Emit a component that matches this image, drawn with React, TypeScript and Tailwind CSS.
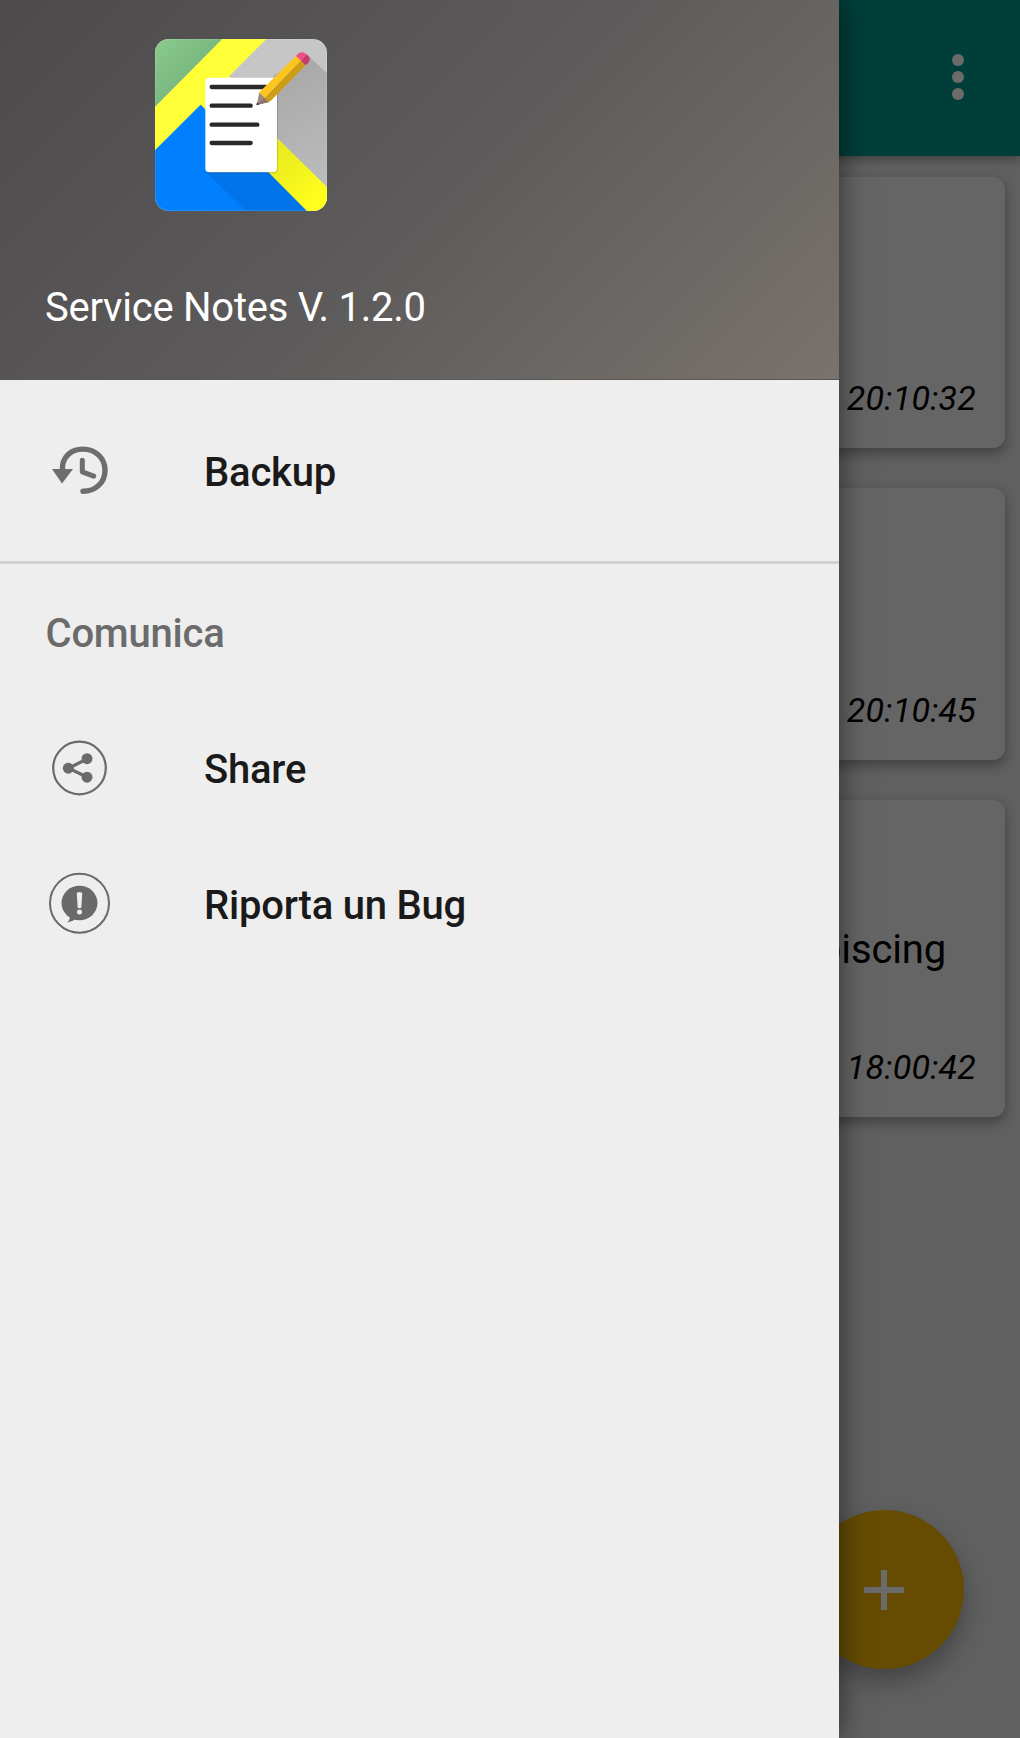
import type { ReactNode } from "react";

function AppLogo() {
  return (
    <svg className="block h-[172px] w-[172px]" viewBox="45 40 516 516" aria-hidden="true">
      <defs>
        <clipPath id="tile">
          <rect x="45" y="40" width="516" height="516" rx="42" />
        </clipPath>
        <linearGradient id="green" x1="0" y1="0" x2="1" y2="1">
          <stop offset="0" stopColor="#8acb8d" />
          <stop offset="0.5" stopColor="#7ab980" />
        </linearGradient>
        <linearGradient id="gray" gradientUnits="userSpaceOnUse" x1="400" y1="150" x2="561" y2="484">
          <stop offset="0" stopColor="#a9a9a9" />
          <stop offset="1" stopColor="#bcbcbc" />
        </linearGradient>
        <linearGradient id="yellow" gradientUnits="userSpaceOnUse" x1="410" y1="380" x2="540" y2="530">
          <stop offset="0" stopColor="#eaea20" />
          <stop offset="1" stopColor="#ffff1c" />
        </linearGradient>
      </defs>
      <g clipPath="url(#tile)">
        <rect x="45" y="40" width="516" height="516" fill="#c6c6c6" />
        <path d="M45 40H247L45 244Z" fill="url(#green)" />
        <path d="M247 40H379L200 219L182 237L45 374V244Z" fill="#ffff38" />
        <path d="M182 237L267 152L561 484V556H498Z" fill="#ffff38" />
        <path d="M410 336L561 484V556H498L385 440H410Z" fill="url(#yellow)" />
        <path d="M400 150V336H410L561 484V143L505 90Z" fill="url(#gray)" />
        <path d="M182 237L500 556H45V374Z" fill="#007fff" />
        <path d="M200 440H385L500 556H318Z" fill="#0074e8" />
        <rect x="46" y="41" width="514" height="514" rx="41" fill="none" stroke="#fff" strokeOpacity="0.2" strokeWidth="2" />
      </g>
      <rect x="198" y="160" width="215" height="283" rx="12" fill="#000" opacity="0.22" />
      <rect x="196" y="156" width="215" height="284" rx="12" fill="#fff" />
      <g stroke="#292929" strokeWidth="13" strokeLinecap="round">
        <path d="M215 184H378M215 240H332M215 297H352M215 352H332" />
      </g>
      <path d="M350 238L358 200L388 229Z" fill="#a1887f" />
      <path d="M350 238L374 216L388 229Z" fill="#8d756d" />
      <path d="M349 239L351 230L358 236Z" fill="#333" />
      <path d="M358 200L468 91L483 105L374 216Z" fill="#ffc51f" />
      <path d="M374 216L483 105L497 119L391 227Q380 229 374 216Z" fill="#cd9e15" />
      <path d="M468 91L474 84Q486 74 500 86L483 105Z" fill="#f0508a" />
      <path d="M483 105L500 86Q516 98 505 111L497 119Z" fill="#c83b6f" />
    </svg>
  );
}

function HistoryIcon() {
  return (
    <svg className="mb-0.5 block h-[50px] w-[58px] text-[#6d6d6d]" viewBox="0 0 58 50" aria-hidden="true">
      <path d="M11.4 25.5C10.6 11.9 20 4.1 32 4.1C44.5 4.1 54 13 54 25.4C54 37.5 44.5 46.3 32 46.3" fill="none" stroke="currentColor" strokeWidth="5.4" strokeLinecap="round" />
      <path d="M1 24H22L11 38.5Z" fill="currentColor" />
      <path d="M31.3 15.2V26.8L42.7 31.2" fill="none" stroke="currentColor" strokeWidth="5" strokeLinecap="round" strokeLinejoin="round" />
    </svg>
  );
}

function ShareIcon() {
  return (
    <svg className="block h-[58px] w-[58px] text-[#6a6a6a]" viewBox="0 0 58 58" aria-hidden="true">
      <circle cx="28.5" cy="29" r="26.3" fill="none" stroke="currentColor" strokeWidth="2.2" />
      <path d="M36 20L17.5 29.2L36 38" fill="none" stroke="currentColor" strokeWidth="3.2" />
      <g fill="currentColor">
        <circle cx="36" cy="19.7" r="5.5" />
        <circle cx="17.3" cy="29.2" r="5.5" />
        <circle cx="36" cy="38.2" r="5.5" />
      </g>
    </svg>
  );
}

function BugIcon() {
  return (
    <svg className="mb-[3px] block h-[64px] w-[64px]" viewBox="0 0 64 64" aria-hidden="true">
      <circle cx="31.5" cy="32.2" r="29.5" fill="none" stroke="#6a6a6a" strokeWidth="2" />
      <ellipse cx="31.5" cy="32" rx="18" ry="17.3" fill="#6a6a6a" />
      <path d="M22 45Q22 49 19 51.500Q25 50.500 29 47Z" fill="#6a6a6a" />
      <path d="M28.8 22.5Q28.8 21 31.5 21Q34.2 21 34.2 22.5L33.3 37H29.7Z" fill="#eee" />
      <circle cx="31.5" cy="41" r="2.5" fill="#eee" />
    </svg>
  );
}

function DrawerItem({ icon, label }: { icon: ReactNode; label: string }) {
  return (
    <li className="flex h-[136px] items-center">
      <span className="flex w-[160px] justify-center">{icon}</span>
      <span className="ml-[44px] pt-1 text-[40px] leading-none font-medium tracking-[-0.22px] text-[#1a1a1a]">{label}</span>
    </li>
  );
}

function NoteCard({ time, text, size }: { time: string; text?: string; size: string }) {
  return (
    <article className={`flex flex-col items-end justify-end rounded-[12px] bg-[#656565] pr-[29px] text-black shadow-[0_5px_12px_1px_rgba(0,0,0,0.3)] ${size}`}>
      {text && <p className="mr-[30px] mb-[73px] text-[40px] leading-[48px] tracking-[-0.15px]">{text}</p>}
      <time className="text-[34px] leading-[40px] tracking-[0.22px] italic">{time}</time>
    </article>
  );
}

export default function App() {
  return (
    <div className="relative h-[1738px] w-[1020px] overflow-hidden bg-[#606060] font-['Roboto',sans-serif]">
      <header className="relative flex h-[156px] items-center justify-end bg-[#003f39] pr-[56px] pb-[3px] shadow-[0_3px_10px_rgba(0,0,0,0.35)]">
        <div className="flex flex-col gap-[5px]">
          <span className="size-3 rounded-full bg-[#6b6b6b]" />
          <span className="size-3 rounded-full bg-[#6b6b6b]" />
          <span className="size-3 rounded-full bg-[#6b6b6b]" />
        </div>
      </header>
      <main className="flex flex-col gap-10 px-[15px] pt-[20.500px]">
        <NoteCard time="20:10:32" size="h-[271.500px] pb-[30px]" />
        <NoteCard time="20:10:45" size="h-[271.500px] pb-[30px]" />
        <NoteCard time="18:00:42" text="piscing" size="h-[317.500px] pb-[30px]" />
      </main>
      <button className="absolute right-[56.500px] bottom-[69px] flex size-[159px] items-center justify-center rounded-full bg-[#664c03] shadow-[0_12px_24px_rgba(0,0,0,0.3)]" aria-label="+">
        <svg className="size-10" viewBox="0 0 40 40" aria-hidden="true">
          <path d="M0 20H40M20 0V40" stroke="#6b6b6b" strokeWidth="6" />
        </svg>
      </button>

      <aside className="absolute inset-y-0 left-0 w-[839px] bg-[#eee] shadow-[0_0_28px_rgba(0,0,0,0.55)]">
        <div className="h-[380px] border-b border-[#5a5857] bg-linear-[135deg,#4c4a4b_0%,#5c5a5a_50%,#79736d_100%] pt-[39px]">
          <div className="pl-[155px]">
            <AppLogo />
          </div>
          <h1 className="mt-[73px] ml-[45px] text-[40px] leading-[48px] tracking-[-0.25px] text-white">Service Notes V. 1.2.0</h1>
        </div>
        <ul className="h-[184px] border-b-[3px] border-[#d2d2d2] pt-[23px]">
          <DrawerItem icon={<HistoryIcon />} label="Backup" />
        </ul>
        <h2 className="mt-[46px] ml-[45.500px] text-[40px] leading-[48px] font-medium tracking-[-0.22px] text-[#6b6b6b]">Comunica</h2>
        <ul className="pt-[42px]">
          <DrawerItem icon={<ShareIcon />} label="Share" />
          <DrawerItem icon={<BugIcon />} label="Riporta un Bug" />
        </ul>
      </aside>
    </div>
  );
}
